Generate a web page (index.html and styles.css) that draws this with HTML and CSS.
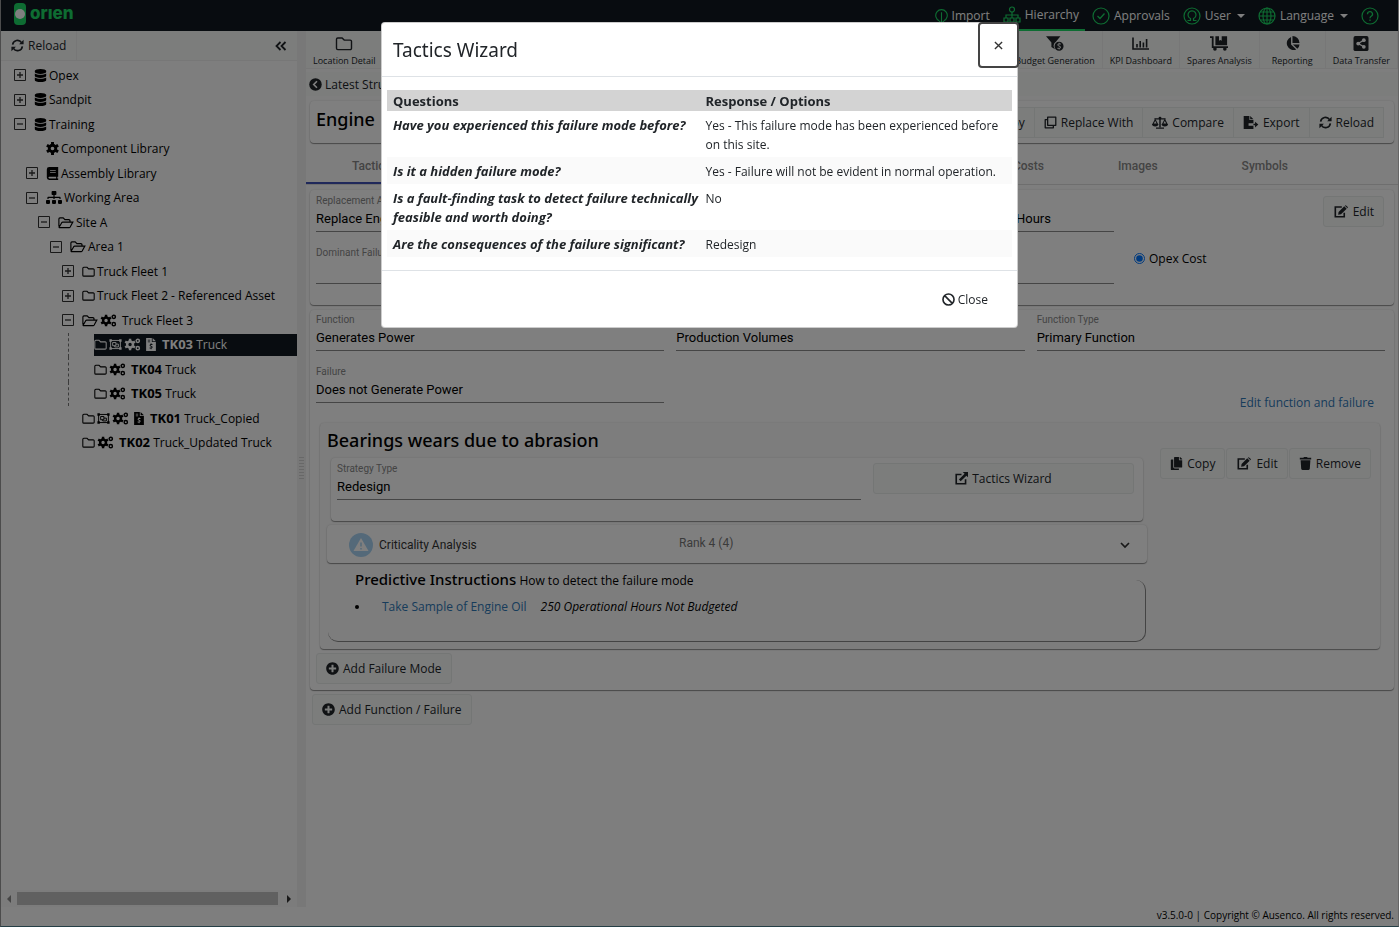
FILE: index.html
```html
<!DOCTYPE html>
<html lang="en">
<head>
    <meta charset="UTF-8">
    <meta name="viewport" content="width=device-width, initial-scale=1.0">
    <title>Orien - Hierarchy</title>
    <link rel="stylesheet" href="styles.css">
</head>
<body>

    <!-- Icon set -->
    <svg class="sprite" aria-hidden="true">
        <symbol id="i-sync" viewBox="0 0 16 16"><path d="M2 7a6 6 0 0 1 11-2.500M14 9a6 6 0 0 1-11 2.500" fill="none" stroke="currentColor" stroke-width="2"/><path d="M15.500 1v5.500H10zM.5 15V9.500H6z"/></symbol>
        <symbol id="i-database" viewBox="0 0 448 512"><path d="M448 73.143v45.714C448 159.143 347.667 192 224 192S0 159.143 0 118.857V73.143C0 32.857 100.333 0 224 0s224 32.857 224 73.143zM448 176v102.857C448 319.143 347.667 352 224 352S0 319.143 0 278.857V176c48.125 33.143 136.208 48.572 224 48.572S399.874 209.143 448 176zm0 160v102.857C448 479.143 347.667 512 224 512S0 479.143 0 438.857V336c48.125 33.143 136.208 48.572 224 48.572S399.874 369.143 448 336z"/></symbol>
        <symbol id="i-sitemap" viewBox="0 0 640 512"><path d="M128 352H32c-17.670 0-32 14.330-32 32v96c0 17.670 14.330 32 32 32h96c17.670 0 32-14.330 32-32v-96c0-17.670-14.330-32-32-32zm-24-80h192v48h48v-48h192v48h48v-57.590c0-21.170-17.230-38.410-38.410-38.410H344v-64h40c17.670 0 32-14.330 32-32V32c0-17.670-14.330-32-32-32H256c-17.670 0-32 14.330-32 32v96c0 17.670 14.330 32 32 32h40v64H94.410C73.230 224 56 241.230 56 262.410V320h48v-48zm264 80h-96c-17.670 0-32 14.330-32 32v96c0 17.670 14.330 32 32 32h96c17.670 0 32-14.330 32-32v-96c0-17.670-14.330-32-32-32zm240 0h-96c-17.670 0-32 14.330-32 32v96c0 17.670 14.330 32 32 32h96c17.670 0 32-14.330 32-32v-96c0-17.670-14.330-32-32-32z"/></symbol>
        <symbol id="i-cog" viewBox="0 0 16 16"><circle cx="8" cy="8" r="4" fill="none" stroke="currentColor" stroke-width="3.500"/><path d="M8 0v4M8 12v4M1.100 4l3.400 2M11.500 10l3.400 2M1.100 12l3.400-2M11.500 6l3.400-2" stroke="currentColor" stroke-width="3.600"/></symbol>
        <symbol id="i-cogs" viewBox="0 0 20 16"><circle cx="7" cy="8" r="3.600" fill="none" stroke="currentColor" stroke-width="3"/><path d="M7 1v3M7 12v3M1 4.500l3 1.700M10 9.800l3 1.700M1 11.500l3-1.700M10 6.200l3-1.700" stroke="currentColor" stroke-width="3"/><circle cx="16.500" cy="3.500" r="2" fill="none" stroke="currentColor" stroke-width="1.800"/><circle cx="16.500" cy="12.500" r="2" fill="none" stroke="currentColor" stroke-width="1.800"/></symbol>
        <symbol id="i-book" viewBox="0 0 14 16"><path d="M3 0h11v12h-1v2h1v2H3a3 3 0 0 1-3-3V3a3 3 0 0 1 3-3zm0 12a1 1 0 0 0 0 2h8.500v-2zM4 4v1h7V4zm0 2.500v1h7v-1z" fill-rule="evenodd"/></symbol>
        <symbol id="i-folder" viewBox="0 0 16 14"><path d="M1 3a1.200 1.200 0 0 1 1.200-1.200h4l2 2h5.600A1.200 1.200 0 0 1 15 5v6.500a1.200 1.200 0 0 1-1.200 1.200H2.200A1.200 1.200 0 0 1 1 11.500z" fill="none" stroke="currentColor" stroke-width="1.300"/></symbol>
        <symbol id="i-folder-open" viewBox="0 0 18 14"><path d="M1 11.500V3a1.200 1.200 0 0 1 1.200-1.200h3.600l2 2h4.500A1.200 1.200 0 0 1 13.500 5v1.500M1.200 12.300l3-5.100a1.500 1.500 0 0 1 1.200-.7h11.300l-3 5.500a1.500 1.500 0 0 1-1.200.7H1.500z" fill="none" stroke="currentColor" stroke-width="1.300"/></symbol>
        <symbol id="i-group" viewBox="0 0 16 14"><path d="M2 2h12v10H2zM4.500 4.500h4v4h-4zM8.500 6.500h3v3.500H7V8.500" fill="none" stroke="currentColor" stroke-width="1.200"/><path d="M.5.5h3v3h-3zM12.500.5h3v3h-3zM.5 10.500h3v3h-3zM12.500 10.500h3v3h-3z"/></symbol>
        <symbol id="i-file" viewBox="0 0 12 16"><path d="M0 0h7v5h5v11H0zM8 0l4 4H8zM2 2v1h3V2zm0 2.200v1h3v-1zM7.800 7.500H6.600v-1h-1v1C4 7.800 3.800 10 5.500 10.500c1.500.4 1.700 1.300.5 1.300H4.300v1h1.300v1h1v-1c1.700-.3 1.900-2.500.2-3-1.500-.4-1.600-1.300-.5-1.300h1.500z" fill-rule="evenodd"/></symbol>
        <symbol id="i-plus-circle" viewBox="0 0 512 512"><path d="M256 8C119 8 8 119 8 256s111 248 248 248 248-111 248-248S393 8 256 8zm144 276c0 6.600-5.400 12-12 12h-92v92c0 6.600-5.400 12-12 12h-56c-6.600 0-12-5.400-12-12v-92h-92c-6.600 0-12-5.400-12-12v-56c0-6.600 5.400-12 12-12h92v-92c0-6.600 5.400-12 12-12h56c6.600 0 12 5.400 12 12v92h92c6.600 0 12 5.400 12 12v56z"/></symbol>
        <symbol id="i-back" viewBox="0 0 16 16"><circle cx="8" cy="8" r="7.700"/><path d="M9.800 4L5.800 8l4 4" fill="none" stroke="#fff" stroke-width="2"/></symbol>
        <symbol id="i-filter" viewBox="0 0 20 16"><path d="M0 0h16l-5 6a5.500 5.500 0 0 0-1 8.500L6 12V7z"/><path d="M14.500 6a5 5 0 1 0 0 10 5 5 0 0 0 0-10zm2 3h-2.200c-1 0-1 .9 0 1.200 3 .8 2.800 3 .8 3.500v.9h-1v-.9h-1.500v-1h2.300c1 0 1-.9 0-1.200-2.700-.7-2.800-2.900-.8-3.400v-.8h1v.8h1.400z" fill-rule="evenodd"/></symbol>
        <symbol id="i-chart" viewBox="0 0 18 14"><path d="M1 1v11.500h16M5 11V7.500M8.200 11V4.500M11.400 11V6M14.600 11V2.500" fill="none" stroke="currentColor" stroke-width="1.600"/></symbol>
        <symbol id="i-dolly" viewBox="0 0 20 16"><path d="M0 0h4v11h16v2H2V2H0zM6 0h4v5l1.500-1L13 5V0h6v10H6z"/><circle cx="5.500" cy="14" r="2"/><circle cx="16.500" cy="14" r="2"/></symbol>
        <symbol id="i-pie" viewBox="0 0 16 16"><path d="M7 1v8l5.500 5.500A7 7 0 1 1 7 1zM8.500 0A7.500 7.500 0 0 1 16 7.500H8.500zM9 9h7a7 7 0 0 1-2.300 4.700z"/></symbol>
        <symbol id="i-share" viewBox="0 0 16 16"><path d="M2 0h12a2 2 0 0 1 2 2v12a2 2 0 0 1-2 2H2a2 2 0 0 1-2-2V2a2 2 0 0 1 2-2z"/><path d="M11 4.500L5 8l6 3.500" fill="none" stroke="#fff" stroke-width="1.400"/><g fill="#fff"><circle cx="11" cy="4.500" r="2"/><circle cx="5" cy="8" r="2"/><circle cx="11" cy="11.500" r="2"/></g></symbol>
        <symbol id="i-clone" viewBox="0 0 16 16"><path d="M4.500 1.500h10v10h-10zM4.500 4.500h-3v10h10v-3" fill="none" stroke="currentColor" stroke-width="1.600" stroke-linejoin="round"/></symbol>
        <symbol id="i-scale" viewBox="0 0 20 16"><path d="M3 3.500h14M10 2v12M5 15h10" fill="none" stroke="currentColor" stroke-width="1.800"/><circle cx="10" cy="2.500" r="1.800"/><path d="M4 4.500L1.200 10h5.600zM16 4.500L13.200 10h5.600z" fill="none" stroke="currentColor" stroke-width="1.300"/><path d="M0 10h8a4 3 0 0 1-8 0zM12 10h8a4 3 0 0 1-8 0z"/></symbol>
        <symbol id="i-export" viewBox="0 0 18 16"><path d="M0 0h7v5h5v4H6v3h6v4H0zM8 0l4 4H8z"/><path d="M12 9.500h2V7l4 3.500-4 3.500v-2.500h-2z"/></symbol>
        <symbol id="i-edit" viewBox="0 0 18 16"><path d="M10 2.500H2v12h11V9.500" fill="none" stroke="currentColor" stroke-width="2"/><path d="M6 8.500L13 1.500l3 3-7 7-3.500.5zM13.800.8a1.300 1.300 0 0 1 1.800 0l1.400 1.400a1.300 1.300 0 0 1 0 1.800z"/></symbol>
        <symbol id="i-external" viewBox="0 0 16 16"><path d="M8 3H1.500v11.500H13V9" fill="none" stroke="currentColor" stroke-width="2"/><path d="M9.500 0H16v6.500l-2-2-7 7L4.800 9.200l7-7z"/></symbol>
        <symbol id="i-copy" viewBox="0 0 448 512"><path d="M320 448v40c0 13.255-10.745 24-24 24H24c-13.255 0-24-10.745-24-24V120c0-13.255 10.745-24 24-24h72v296c0 30.879 25.121 56 56 56h168zm0-344V0H152c-13.255 0-24 10.745-24 24v368c0 13.255 10.745 24 24 24h272c13.255 0 24-10.745 24-24V128H344c-13.200 0-24-10.800-24-24zm120.971-31.029L375.029 7.029A24 24 0 0 0 358.059 0H352v96h96v-6.059a24 24 0 0 0-7.029-16.970z"/></symbol>
        <symbol id="i-trash" viewBox="0 0 14 16"><path d="M0 1h4.500l.5-1h4l.5 1H14v2H0zM1 4h12l-.7 10.600a1.500 1.500 0 0 1-1.500 1.400H3.200a1.500 1.500 0 0 1-1.500-1.400z"/></symbol>
        <symbol id="i-ban" viewBox="0 0 16 16"><path d="M3.300 3.300l9.400 9.400M14.800 8A6.800 6.800 0 1 1 1.200 8a6.800 6.800 0 0 1 13.600 0z" fill="none" stroke="currentColor" stroke-width="2"/></symbol>
        <symbol id="i-collapse" viewBox="0 0 12 10"><path d="M5.500 1l-4 4 4 4M10.500 1l-4 4 4 4" fill="none" stroke="currentColor" stroke-width="1.800"/></symbol>
        <symbol id="i-plus" viewBox="0 0 12 12"><path d="M.5.5h11v11H.5z" fill="none" stroke="currentColor"/><path d="M3 6h6M6 3v6" stroke="currentColor" stroke-width="1.300"/></symbol>
        <symbol id="i-minus" viewBox="0 0 12 12"><path d="M.5.5h11v11H.5z" fill="none" stroke="currentColor"/><path d="M3 6h6" stroke="currentColor" stroke-width="1.300"/></symbol>
        <symbol id="i-import" viewBox="0 0 14 18"><path d="M4.500 14A6.200 6.200 0 1 1 9.500 14M7 5v12M4.500 14.500L7 17l2.500-2.500" fill="none" stroke="currentColor" stroke-width="1.200"/></symbol>
        <symbol id="i-tree" viewBox="0 0 18 18"><path d="M9 6v6M3 12V9h12v3" fill="none" stroke="currentColor" stroke-width="1.200"/><circle cx="9" cy="3.500" r="2.500" fill="none" stroke="currentColor" stroke-width="1.200"/><path d="M1 12h4v4H1zM7 12h4v4H7zM13 12h4v4h-4z" fill="none" stroke="currentColor" stroke-width="1.200"/></symbol>
        <symbol id="i-check" viewBox="0 0 18 18"><circle cx="9" cy="9" r="8" fill="none" stroke="currentColor" stroke-width="1.200"/><path d="M5.500 9l2.500 2.500 4.500-5" fill="none" stroke="currentColor" stroke-width="1.300"/></symbol>
        <symbol id="i-user" viewBox="0 0 18 18"><circle cx="9" cy="9" r="8" fill="none" stroke="currentColor" stroke-width="1.200"/><path d="M4.500 13.500h3V11.500a4 4 0 1 1 3 0v2h3" fill="none" stroke="currentColor" stroke-width="1.200"/></symbol>
        <symbol id="i-globe" viewBox="0 0 18 18"><path d="M9 1v16M1 9h16M2.300 5h13.400M2.300 13h13.400" stroke="currentColor" stroke-width="1.100"/><circle cx="9" cy="9" r="8" fill="none" stroke="currentColor" stroke-width="1.200"/><ellipse cx="9" cy="9" rx="4" ry="8" fill="none" stroke="currentColor" stroke-width="1.100"/></symbol>
        <symbol id="i-help" viewBox="0 0 18 18"><circle cx="9" cy="9" r="8" fill="none" stroke="currentColor" stroke-width="1.200"/><path d="M6.500 7.200a2.500 2.500 0 1 1 3.700 2.100C9.200 9.900 9 10.300 9 11.200M9 12.500v1.500" fill="none" stroke="currentColor" stroke-width="1.300"/></symbol>
        <symbol id="i-warning" viewBox="0 0 24 24"><circle cx="12" cy="12" r="12" fill="#a9d3f2"/><path d="M12 5l7.500 13h-15z" fill="#fff"/><path d="M12 9.500v4M12 15v1.500" stroke="#a9d3f2" stroke-width="1.500"/></symbol>
        <symbol id="i-down" viewBox="0 0 10 7"><path d="M1 1l4 4 4-4" fill="none" stroke="currentColor" stroke-width="1.700"/></symbol>
    </svg>

    <div class="app">
        <header class="topbar">
            <a class="logo" href="#">
                <svg viewBox="0 0 12 22"><rect width="12" height="22" rx="4"/><circle cx="6" cy="11" r="5"/></svg>
                <span>orıen</span>
            </a>
            <nav class="topnav">
                <a href="#"><svg class="icon-import"><use href="#i-import"/></svg>Import</a>
                <a href="#" class="active"><svg><use href="#i-tree"/></svg>Hierarchy</a>
                <a href="#"><svg><use href="#i-check"/></svg>Approvals</a>
                <a href="#" class="dropdown"><svg><use href="#i-user"/></svg>User</a>
                <a href="#" class="dropdown"><svg><use href="#i-globe"/></svg>Language</a>
                <a href="#" aria-label="Help"><svg><use href="#i-help"/></svg></a>
            </nav>
        </header>

        <div class="workspace">
            <aside class="sidebar">
                <div class="sidebar-tools">
                    <button class="tool"><svg class="icon"><use href="#i-sync"/></svg>Reload</button>
                    <button class="collapse" aria-label="Collapse"><svg><use href="#i-collapse"/></svg></button>
                </div>
                <ul class="tree">
                    <li class="d0"><svg class="toggle"><use href="#i-plus"/></svg><svg class="icon"><use href="#i-database"/></svg>Opex</li>
                    <li class="d0"><svg class="toggle"><use href="#i-plus"/></svg><svg class="icon"><use href="#i-database"/></svg>Sandpit</li>
                    <li class="d0"><svg class="toggle"><use href="#i-minus"/></svg><svg class="icon"><use href="#i-database"/></svg>Training</li>
                    <li class="d1"><span class="toggle"></span><svg class="icon"><use href="#i-cog"/></svg>Component Library</li>
                    <li class="d1"><svg class="toggle"><use href="#i-plus"/></svg><svg class="icon"><use href="#i-book"/></svg>Assembly Library</li>
                    <li class="d1"><svg class="toggle"><use href="#i-minus"/></svg><svg class="icon wide"><use href="#i-sitemap"/></svg>Working Area</li>
                    <li class="d2"><svg class="toggle"><use href="#i-minus"/></svg><svg class="icon wide"><use href="#i-folder-open"/></svg>Site A</li>
                    <li class="d3"><svg class="toggle"><use href="#i-minus"/></svg><svg class="icon wide"><use href="#i-folder-open"/></svg>Area 1</li>
                    <li class="d4"><svg class="toggle"><use href="#i-plus"/></svg><svg class="icon"><use href="#i-folder"/></svg>Truck Fleet 1</li>
                    <li class="d4"><svg class="toggle"><use href="#i-plus"/></svg><svg class="icon"><use href="#i-folder"/></svg>Truck Fleet 2 - Referenced Asset</li>
                    <li class="d4"><svg class="toggle"><use href="#i-minus"/></svg><svg class="icon wide"><use href="#i-folder-open"/></svg><svg class="icon cogs"><use href="#i-cogs"/></svg>Truck Fleet 3</li>
                    <li class="d5"><div class="node selected"><svg class="icon"><use href="#i-folder"/></svg><svg class="icon"><use href="#i-group"/></svg><svg class="icon cogs"><use href="#i-cogs"/></svg><svg class="icon file"><use href="#i-file"/></svg><b>TK03</b> Truck</div></li>
                    <li class="d5"><div class="node"><svg class="icon"><use href="#i-folder"/></svg><svg class="icon cogs"><use href="#i-cogs"/></svg><b>TK04</b> Truck</div></li>
                    <li class="d5"><div class="node"><svg class="icon"><use href="#i-folder"/></svg><svg class="icon cogs"><use href="#i-cogs"/></svg><b>TK05</b> Truck</div></li>
                    <li class="d4"><span class="toggle"></span><svg class="icon"><use href="#i-folder"/></svg><svg class="icon"><use href="#i-group"/></svg><svg class="icon cogs"><use href="#i-cogs"/></svg><svg class="icon file"><use href="#i-file"/></svg><b>TK01</b> Truck_Copied</li>
                    <li class="d4"><span class="toggle"></span><svg class="icon"><use href="#i-folder"/></svg><svg class="icon cogs"><use href="#i-cogs"/></svg><b>TK02</b> Truck_Updated Truck</li>
                </ul>
                <div class="scrollbar"><i class="left"></i><i class="thumb"></i><i class="right"></i></div>
            </aside>

            <div class="splitter"><i></i></div>

            <main class="content">
                <div class="ribbon">
                    <button><svg><use href="#i-folder"/></svg>Location Detail</button>
                    <span class="fill"></span>
                    <button><svg><use href="#i-filter"/></svg>Budget Generation</button>
                    <button><svg><use href="#i-chart"/></svg>KPI Dashboard</button>
                    <button><svg><use href="#i-dolly"/></svg>Spares Analysis</button>
                    <button><svg><use href="#i-pie"/></svg>Reporting</button>
                    <button><svg><use href="#i-share"/></svg>Data Transfer</button>
                </div>
                <div class="crumbs">
                    <button><svg class="icon"><use href="#i-back"/></svg>Latest Structure</button>
                </div>

                <section class="card title-card">
                    <h1>Engine</h1>
                    <div class="btn-group">
                        <button class="btn">Copy</button>
                        <button class="btn"><svg class="icon"><use href="#i-clone"/></svg>Replace With</button>
                        <button class="btn"><svg class="icon wide"><use href="#i-scale"/></svg>Compare</button>
                        <button class="btn"><svg class="icon wide"><use href="#i-export"/></svg>Export</button>
                        <button class="btn"><svg class="icon"><use href="#i-sync"/></svg>Reload</button>
                    </div>
                </section>

                <nav class="tabs">
                    <a href="#" class="current">Tactics</a>
                    <span class="fill"></span>
                    <a href="#" class="compact">Costs</a>
                    <a href="#">Images</a>
                    <a href="#">Symbols</a>
                </nav>

                <section class="card asset-card">
                    <div class="asset-fields">
                        <div class="field"><label for="asset">Replacement Asset</label><input id="asset" value="Replace Engine" readonly></div>
                        <div class="field"><label for="unit">&nbsp;</label><input id="unit" value="Hours" readonly></div>
                        <div class="field whole"><label for="dominant">Dominant Failure</label><input id="dominant" readonly></div>
                    </div>
                    <label class="radio"><input type="radio" name="cost" checked>Opex Cost</label>
                    <button class="btn"><svg class="icon wide"><use href="#i-edit"/></svg>Edit</button>
                </section>

                <section class="card function-card">
                    <div class="function-fields">
                        <div class="field"><label for="function">Function</label><input id="function" value="Generates Power" readonly></div>
                        <div class="field"><label for="standard">Performance</label><input id="standard" value="Production Volumes" readonly></div>
                        <div class="field"><label for="type">Function Type</label><input id="type" value="Primary Function" readonly></div>
                        <div class="field"><label for="failure">Failure</label><input id="failure" value="Does not Generate Power" readonly></div>
                        <a class="edit-link" href="#">Edit function and failure</a>
                    </div>

                    <article class="card mode">
                        <div class="mode-body">
                            <h2>Bearings wears due to abrasion</h2>
                            <div class="card strategy">
                                <div class="field"><label for="strategy">Strategy Type</label><input id="strategy" value="Redesign" readonly></div>
                                <button class="btn"><svg class="icon"><use href="#i-external"/></svg>Tactics Wizard</button>
                            </div>
                            <button class="card criticality">
                                <svg class="warning"><use href="#i-warning"/></svg>
                                <span class="name">Criticality Analysis</span>
                                <span class="rank">Rank 4 (4)</span>
                                <svg class="chevron"><use href="#i-down"/></svg>
                            </button>
                            <fieldset class="instructions">
                                <legend><strong>Predictive Instructions</strong> How to detect the failure mode</legend>
                                <ul>
                                    <li><a href="#">Take Sample of Engine Oil</a><em>250 Operational Hours Not Budgeted</em></li>
                                </ul>
                            </fieldset>
                        </div>
                        <div class="mode-actions">
                            <button class="btn"><svg class="icon"><use href="#i-copy"/></svg>Copy</button>
                            <button class="btn"><svg class="icon wide"><use href="#i-edit"/></svg>Edit</button>
                            <button class="btn"><svg class="icon"><use href="#i-trash"/></svg>Remove</button>
                        </div>
                    </article>

                    <button class="btn"><svg class="icon"><use href="#i-plus-circle"/></svg>Add Failure Mode</button>
                </section>

                <button class="btn add-function"><svg class="icon"><use href="#i-plus-circle"/></svg>Add Function / Failure</button>
            </main>
        </div>

        <footer class="footer">v3.5.0-0 | Copyright © Ausenco. All rights reserved.</footer>
    </div>

    <!-- Tactics Wizard dialog -->
    <div class="backdrop">
        <div class="modal" role="dialog" aria-labelledby="modal-title">
            <div class="modal-header">
                <h4 id="modal-title">Tactics Wizard</h4>
                <button class="modal-x" aria-label="Close dialog"><svg viewBox="0 0 10 10"><path d="M1 1l8 8M9 1l-8 8"/></svg></button>
            </div>
            <div class="modal-body">
                <table>
                    <thead>
                        <tr><th>Questions</th><th>Response / Options</th></tr>
                    </thead>
                    <tbody>
                        <tr><td class="question">Have you experienced this failure mode before?</td><td>Yes - This failure mode has been experienced before on this site.</td></tr>
                        <tr><td class="question">Is it a hidden failure mode?</td><td>Yes - Failure will not be evident in normal operation.</td></tr>
                        <tr><td class="question">Is a fault-finding task to detect failure technically feasible and worth doing?</td><td>No</td></tr>
                        <tr><td class="question">Are the consequences of the failure significant?</td><td>Redesign</td></tr>
                    </tbody>
                </table>
            </div>
            <div class="modal-footer">
                <button><svg class="icon"><use href="#i-ban"/></svg>Close</button>
            </div>
        </div>
    </div>

</body>
</html>
```

FILE: styles.css
```css
* {
    box-sizing: border-box;
}
body {
    margin: 0;
    font-family: "Open Sans", "Segoe UI", sans-serif;
    font-size: 12px;
    line-height: 19px;
    color: #000;
    background-color: #fdfdfd;
}
button, input {
    font: inherit;
    color: inherit;
}
button {
    cursor: pointer;
    margin: 0;
}
svg {
    fill: currentColor;
    flex: none;
}
h1, h2, h4, ul {
    margin: 0;
    padding: 0;
}
a {
    color: #2f78b7;
    text-decoration: none;
}
.sprite {
    display: none;
}
.icon {
    width: 13px;
    height: 13px;
}
.icon.wide {
    width: 16px;
}
.fill {
    flex: 1;
}
.app {
    display: flex;
    flex-direction: column;
    min-height: 100vh;
    border-left: 1px solid #999;
    border-right: 1px solid #ccc;
    border-bottom: 1px solid #4a7f8c;
}

/* Top bar */
.topbar {
    display: flex;
    justify-content: space-between;
    height: 31px;
    padding: 0 13px;
    background-color: #101820;
}
.logo {
    display: flex;
    align-items: center;
    gap: 4px;
    height: 27px;
    color: #1cd964;
    font-family: Inter, sans-serif;
    font-size: 17px;
    font-weight: 800;
}
.logo svg {
    width: 12px;
    height: 22px;
}
.logo circle {
    fill: #fff;
}
.topnav {
    display: flex;
    gap: 1px;
}
.topnav a {
    display: flex;
    align-items: center;
    gap: 4px;
    padding: 0 6px;
    color: #fff;
}
.topnav svg {
    width: 18px;
    height: 18px;
    color: #1cd964;
}
.topnav .icon-import {
    width: 13px;
}
.topnav .active {
    border-bottom: 2px solid #1cd964;
}
.dropdown::after {
    content: "";
    margin-left: 2px;
    border: 4px solid transparent;
    border-top-color: #fff;
    border-bottom: 0;
}

/* Sidebar */
.workspace {
    display: flex;
    flex: 1;
}
.sidebar {
    display: flex;
    flex-direction: column;
    width: 296px;
}
.sidebar-tools {
    display: flex;
    justify-content: space-between;
    height: 30px;
    background-color: #f8faf9;
    border-bottom: 1px solid #efefef;
}
.sidebar-tools button {
    display: flex;
    align-items: center;
    gap: 4px;
    padding: 0 10px;
    color: #212529;
    background: none;
    border: 0;
}
.sidebar-tools .tool {
    border-right: 1px solid #eee;
}
.collapse svg {
    width: 12px;
    height: 10px;
}
.tree {
    display: grid;
    grid-template-rows: repeat(16, 1fr);
    height: 392px;
    margin-top: 2px;
    list-style: none;
    white-space: pre;
}
.tree li, .node {
    display: flex;
    align-items: center;
}
.tree b {
    font-size: 13px;
}
.tree .toggle {
    width: 12px;
    height: 12px;
    margin-right: 8px;
    color: #333;
}
.tree .icon {
    margin-right: 2px;
}
.tree .icon.cogs {
    width: 17px;
    margin-right: 5px;
}
.tree .icon.file {
    width: 10px;
    margin-right: 6px;
}
.d0 { padding-left: 13px; }
.d1 { padding-left: 25px; }
.d2 { padding-left: 37px; }
.d3 { padding-left: 49px; }
.d4 { padding-left: 61px; }
.d5 { padding-left: 67px; }
.d5::before {
    content: "";
    align-self: stretch;
    width: 25px;
    border-left: 1px dashed #777;
}
.node {
    flex: 1;
    height: 22px;
}
.node.selected {
    color: #fff;
    background-color: #101820;
}
.scrollbar {
    display: flex;
    align-items: center;
    gap: 6px;
    height: 17px;
    margin-top: auto;
    padding: 0 6px;
    background-color: #f8f8f8;
}
.scrollbar .thumb {
    flex: 1;
    height: 13px;
    margin-right: 3px;
    background-color: #c1c1c1;
}
.scrollbar .left, .scrollbar .right {
    border: 4px solid transparent;
}
.scrollbar .left {
    border-left: 0;
    border-right-color: #8a8a8a;
}
.scrollbar .right {
    border-right: 0;
    border-left-color: #333;
}
.splitter {
    display: flex;
    align-items: center;
    justify-content: center;
    width: 9px;
    background-color: #f0f0f0;
}
.splitter i {
    width: 5px;
    height: 24px;
    background: repeating-linear-gradient(#d0d0d0 0 1px, transparent 1px 3px);
}

/* Content */
.content {
    flex: 1;
    min-width: 0;
}
.ribbon {
    display: flex;
    height: 38px;
    background-color: #f8faf9;
    border-bottom: 1px solid #eee;
}
.ribbon button {
    display: flex;
    flex-direction: column;
    align-items: center;
    gap: 4px;
    min-width: 66px;
    padding: 5px 7px 0;
    font-size: 9px;
    line-height: 12px;
    color: #212529;
    background: none;
    border: 0;
    border-right: 1px solid #eee;
}
.ribbon svg {
    width: 18px;
    height: 15px;
}
.crumbs {
    margin-top: 3px;
    background-color: #f8faf9;
}
.crumbs button {
    display: flex;
    align-items: center;
    gap: 3px;
    height: 24px;
    padding: 0 3px;
    color: #212529;
    background: none;
    border: 0;
}
.card {
    border: 0;
    border-radius: 4px;
    background-color: #fff;
    box-shadow: 0 1px 1px rgba(0, 0, 0, .4), 0 0 2px rgba(0, 0, 0, .15);
}
.btn {
    display: inline-flex;
    align-items: center;
    justify-content: center;
    gap: 4px;
    height: 31px;
    padding: 0 9px;
    color: #212529;
    background-color: #f8faf9;
    border: 1px solid #e9eceb;
    border-radius: 3px;
}
.title-card {
    display: flex;
    align-items: center;
    justify-content: space-between;
    height: 42px;
    margin: 5px 4px 0;
    padding: 0 10px 0 6px;
}
h1, h2 {
    font-family: "Noto Sans", sans-serif;
    font-size: 18px;
    font-weight: 500;
    line-height: 24px;
}
h1 {
    padding-bottom: 7px;
}
.btn-group {
    display: flex;
}
.btn-group .btn {
    margin-left: -1px;
    border-radius: 0;
}
.tabs {
    display: flex;
    height: 42px;
    padding-right: 68px;
    border-bottom: 1px solid #ddd;
    font-family: Roboto, sans-serif;
    font-size: 12px;
    font-weight: 500;
}
.tabs a {
    padding: 14px 42px 0;
    color: #888;
}
.tabs .current {
    padding: 14px 46px 0;
    border-bottom: 2px solid #3f51b5;
}
.tabs .compact {
    padding: 14px 32px 0;
}

/* Fields */
.field label {
    display: block;
    height: 12px;
    font-family: Roboto, sans-serif;
    font-size: 10px;
    line-height: 14px;
    color: #888;
}
.field input {
    display: block;
    width: 100%;
    height: 26px;
    padding: 0;
    font-family: Roboto, sans-serif;
    font-size: 13px;
    background: none;
    border: 0;
    border-bottom: 1px solid #8a8a8a;
    outline: 0;
}
.asset-card {
    display: flex;
    margin: 5px 4px 0;
    padding: 4px 10px 21px 6px;
}
.asset-card .btn {
    margin-top: 2px;
}
.asset-fields {
    display: grid;
    grid-template-columns: 1fr 98px;
    gap: 14px 12px;
    width: 798px;
}
.asset-fields .whole {
    grid-column: span 2;
}
.radio {
    display: flex;
    flex: 1;
    align-items: center;
    align-self: end;
    height: 52px;
    margin-left: 20px;
}
.radio input {
    width: 11px;
    height: 11px;
    margin: 0 4px 0 0;
}
.function-card {
    margin: 5px 4px 0;
    padding: 3px 9px 6px 6px;
}
.function-fields {
    display: grid;
    grid-template-columns: repeat(3, 1fr);
    gap: 14px 12px;
}
.edit-link {
    grid-column: 3;
    justify-self: end;
    padding: 28px 11px 0 0;
}

/* Failure mode */
.mode {
    display: flex;
    gap: 13px;
    margin: 11px 5px 4px 4px;
    padding: 5px 9px 7px 7px;
    background-color: #fafafa;
}
.mode-body {
    flex: 1;
}
.strategy {
    display: grid;
    grid-template-columns: 2fr 1fr;
    gap: 12px;
    margin: 6px 4px 4px;
    padding: 4px 9px 21px 6px;
}
.strategy .btn {
    margin-top: 1px;
}
.criticality {
    display: flex;
    align-items: center;
    width: 100%;
    height: 38px;
    padding: 2px 17px 0 22px;
    font-family: Roboto, sans-serif;
    font-size: 12px;
    text-align: left;
    color: #333;
}
.criticality .warning {
    width: 24px;
    height: 24px;
    margin-right: 6px;
}
.criticality .name {
    width: 300px;
}
.criticality .rank {
    flex: 1;
    padding-bottom: 4px;
    color: #777;
}
.criticality .chevron {
    width: 10px;
    height: 7px;
}
.instructions {
    min-height: 72px;
    margin: 7px 1px 0;
    padding: 7px 0 0 0;
    border: 0 solid #888;
    border-width: 0 1px 1px 0;
    border-radius: 10px;
}
.instructions legend {
    margin-left: 27px;
    padding: 0;
}
.instructions strong {
    font-family: "Noto Sans", sans-serif;
    font-size: 15px;
    font-weight: 500;
}
.instructions ul {
    padding-left: 42px;
}
.instructions li {
    padding-left: 12px;
}
.instructions em {
    margin-left: 14px;
}
.mode-actions {
    display: flex;
    gap: 1px;
    margin-top: 20px;
}
.add-function {
    margin: 4px 0 0 6px;
}
.footer {
    height: 19px;
    padding-right: 4px;
    font-size: 10px;
    line-height: 17px;
    text-align: right;
}

/* Modal */
.backdrop {
    position: fixed;
    inset: 0;
    background-color: rgba(0, 0, 0, .5);
}
.modal {
    max-width: 637px;
    margin: 22px auto 0;
    color: #212529;
    background-color: #fff;
    border: 1px solid rgba(0, 0, 0, .2);
    border-radius: 4px;
}
.modal-header {
    display: flex;
    justify-content: space-between;
    height: 54px;
    padding-left: 11px;
    border-bottom: 1px solid #dee2e6;
}
.modal-header h4 {
    font-family: "Noto Sans", sans-serif;
    font-size: 19px;
    font-weight: 400;
    line-height: 54px;
}
.modal-x {
    width: 41px;
    height: 46px;
    margin: -1px -2px 0 0;
    padding: 0;
    background-color: #fff;
    border: 2px solid #444;
    border-radius: 4px;
}
.modal-x svg {
    width: 9px;
    height: 9px;
    stroke: #333;
    stroke-width: 1.5px;
}
.modal-body {
    padding: 13px 5px;
}
.modal table {
    width: 100%;
    table-layout: fixed;
    border-collapse: collapse;
}
.modal th {
    padding: 2px 6px 0;
    font-size: 13px;
    text-align: left;
    background-color: #d3d3d3;
}
.modal td {
    padding: 5px 6px 3px;
    vertical-align: top;
}
.modal .question {
    padding-right: 0;
    font-size: 13px;
    font-weight: bold;
    font-style: italic;
}
.modal tbody tr:nth-child(even) {
    background-color: #fafafa;
}
.modal-footer {
    display: flex;
    justify-content: flex-end;
    height: 57px;
    padding: 12px 19px;
    border-top: 1px solid #dee2e6;
}
.modal-footer button {
    display: flex;
    align-items: center;
    gap: 3px;
    padding: 0 10px;
    background: none;
    border: 0;
}
```
